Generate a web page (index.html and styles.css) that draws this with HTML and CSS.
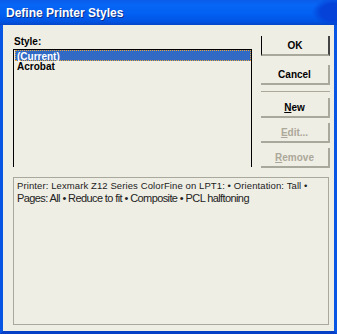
FILE: index.html
```html
<!DOCTYPE html>
<html lang="en">

<head>
    <title>Define Printer Styles</title>
    <link rel="stylesheet" href="styles.css">
</head>

<body>
    <div class="window">
        <div class="titlebar">
            <span class="title">Define Printer Styles</span>
        </div>
        <div class="content">
            <div class="top">
                <div class="style-col">
                    <div class="label">Style:</div>
                    <div class="listbox">
                        <div class="item selected">(Current)</div>
                        <div class="item">Acrobat</div>
                    </div>
                </div>
                <div class="buttons">
                    <button class="btn default">OK</button>
                    <button class="btn">Cancel</button>
                    <div class="sep"></div>
                    <button class="btn"><u>N</u>ew</button>
                    <button class="btn" disabled><u>E</u>dit...</button>
                    <button class="btn" disabled><u>R</u>emove</button>
                </div>
            </div>
            <!-- summary of the selected style -->
            <div class="info">
                <div class="line1">Printer: Lexmark Z12 Series ColorFine on LPT1: &bull; Orientation: Tall &bull;</div>
                <div class="line2">Pages: All &bull; Reduce to fit &bull; Composite &bull; PCL halftoning</div>
            </div>
        </div>
    </div>
</body>

</html>
```

FILE: styles.css
```css
body {
    margin: 0;
    padding: 0;
    font-family: "Liberation Sans", Arial, sans-serif;
    background-color: #ffffff;
}

/* window frame */
.window {
    width: 337px;
    height: 334px;
    box-sizing: border-box;
    border-left: 3px solid #0a56e4;
    border-right: 3px solid #0a56e4;
    border-bottom: 3px solid #0640c6;
    background-color: #efeee5;
    display: flex;
    flex-direction: column;
}

.titlebar {
    height: 25px;
    margin: 0 -3px;
    flex-shrink: 0;
    display: flex;
    align-items: center;
    padding-left: 6px;
    background:
        radial-gradient(ellipse 22px 14px at 334px 12px, #0442d8 60%, rgba(4, 66, 216, 0) 100%),
        linear-gradient(#0a5ce8 0%, #0866f6 20%, #0260f2 55%, #0154e4 85%, #0446c8 100%);
}

.title {
    color: #ffffff;
    font-size: 12px;
    font-weight: bold;
    text-shadow: 1px 1px 0 #0a2e8a;
    margin-top: 1px;
}

.content {
    flex: 1;
    padding: 11px 4px 6px 10px;
    display: flex;
    flex-direction: column;
}

.top {
    display: flex;
    gap: 9px;
}

.style-col {
    display: flex;
    flex-direction: column;
}

.label {
    font-size: 10px;
    font-weight: bold;
    line-height: 12px;
    height: 13px;
    padding-left: 1px;
    color: #000;
}

.listbox {
    width: 239px;
    height: 118px;
    box-sizing: border-box;
    border-left: 1px solid #000;
    border-top: 1px solid #000;
    border-right: 1px solid #000;
    padding: 0 0 0 1px;
}

.item {
    height: 12px;
    line-height: 12px;
    font-size: 10px;
    font-weight: bold;
    padding-left: 2px;
    color: #000;
}

.item.selected {
    height: 11px;
    line-height: 11px;
    box-sizing: border-box;
    background-color: #316ac5;
    color: #fff;
    border: 1px dotted #e9a43c;
    padding-left: 1px;
}

/* right-hand button column */
.buttons {
    width: 70px;
    display: flex;
    flex-direction: column;
}

.btn {
    height: 20px;
    padding: 0;
    margin-bottom: 5px;
    font-family: "Liberation Sans", Arial, sans-serif;
    font-size: 10px;
    font-weight: bold;
    color: #000;
    background-color: #efeee5;
    border: 0;
    border-right: 2px solid #a9a89c;
    border-bottom: 2px solid #a9a89c;
}

.btn:last-child {
    margin-bottom: 0;
}

.btn.default {
    border-left: 1px solid #000;
    border-right: 2px solid #444;
    margin-bottom: 9px;
}

.btn:disabled {
    color: #aca899;
}

.sep {
    height: 1px;
    background-color: #aca899;
    margin: 1px 0 6px 0;
}

.info {
    margin-top: 9px;
    margin-right: 1px;
    flex: 1;
    border: 1px solid #a9a89c;
    padding: 3px 3px;
    color: #222;
}

.line1 {
    font-size: 9.5px;
    line-height: 10px;
    letter-spacing: 0.1px;
}

.line2 {
    font-size: 11px;
    line-height: 13px;
    letter-spacing: -0.6px;
    margin-top: 1px;
}
```
